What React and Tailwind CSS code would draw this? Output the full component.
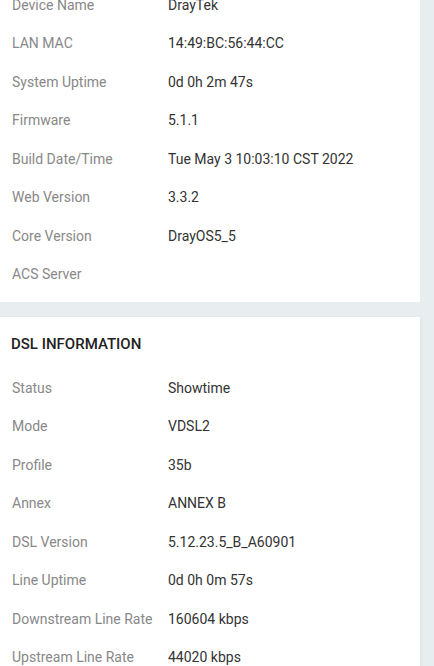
const systemRows = [
  ['Device Name', 'DrayTek'],
  ['LAN MAC', '14:49:BC:56:44:CC'],
  ['System Uptime', '0d 0h 2m 47s'],
  ['Firmware', '5.1.1'],
  ['Build Date/Time', 'Tue May 3 10:03:10 CST 2022'],
  ['Web Version', '3.3.2'],
  ['Core Version', 'DrayOS5_5'],
  ['ACS Server', ''],
];

const dslRows = [
  ['Status', 'Showtime'],
  ['Mode', 'VDSL2'],
  ['Profile', '35b'],
  ['Annex', 'ANNEX B'],
  ['DSL Version', '5.12.23.5_B_A60901'],
  ['Line Uptime', '0d 0h 0m 57s'],
  ['Downstream Line Rate', '160604 kbps'],
  ['Upstream Line Rate', '44020 kbps'],
];

function InfoRow({ label, value }) {
  return (
    <div className="flex items-center h-[38.5px] text-[14px]">
      <span className="w-[168px] shrink-0 pl-3 text-[#888888]">{label}</span>
      <span className="text-[#333333]">{value}</span>
    </div>
  );
}

export default function App() {
  return (
    <div className="min-h-[666px] bg-[#e8edf0] overflow-hidden font-['Roboto',sans-serif]">
      <div className="w-[420px] -mt-[14px]">
        <div className="bg-white pb-2">
          {systemRows.map(([label, value]) => (
            <InfoRow key={label} label={label} value={value} />
          ))}
        </div>

        <div className="mt-[15px] bg-white shadow-[0_1px_4px_rgba(0,0,0,0.08)]">
          <div className="h-[52px] flex items-center pl-[11px] pt-[2px] text-[15px] font-medium text-[#222222]">
            DSL INFORMATION
          </div>
          {dslRows.map(([label, value]) => (
            <InfoRow key={label} label={label} value={value} />
          ))}
        </div>
      </div>
    </div>
  );
}
